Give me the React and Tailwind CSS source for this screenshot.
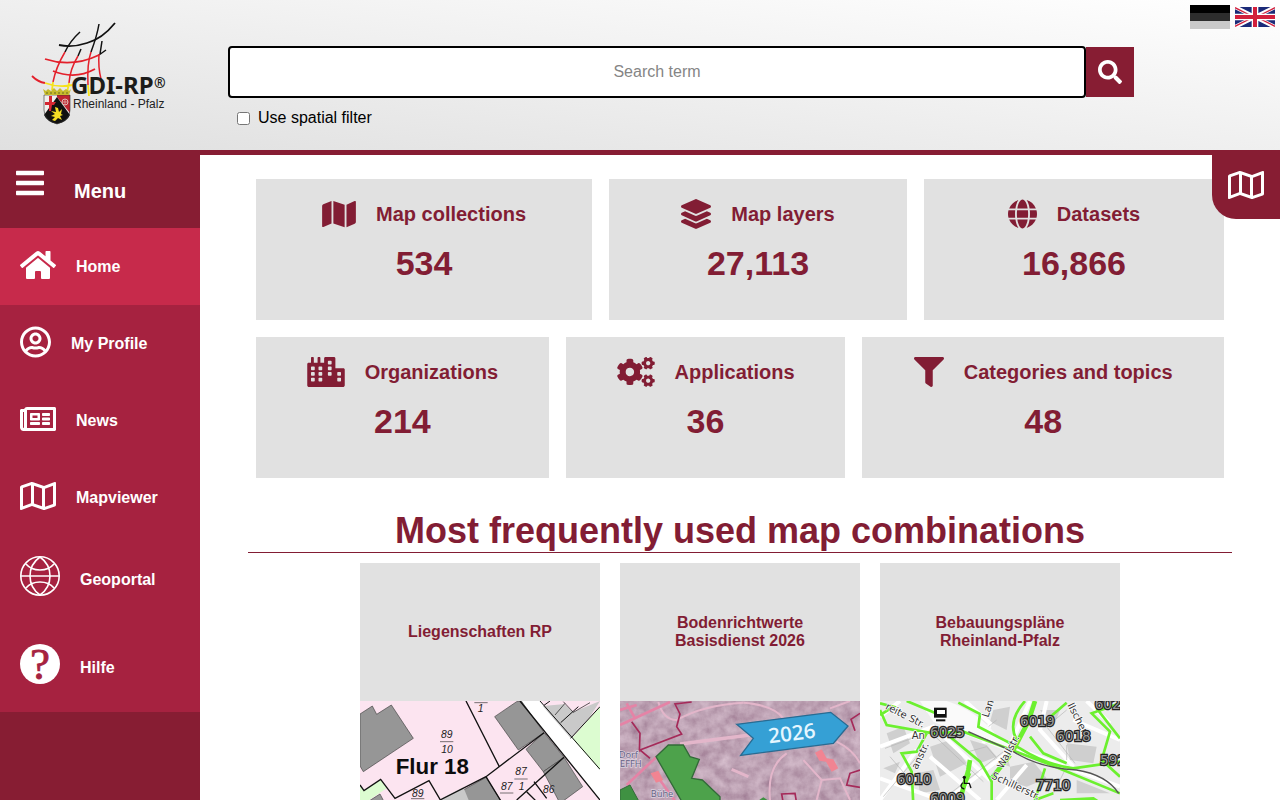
import {
  FaBars,
  FaCity,
  FaCogs,
  FaFilter,
  FaGlobe,
  FaHome,
  FaLayerGroup,
  FaMap,
  FaRegMap,
  FaRegNewspaper,
  FaRegUserCircle,
  FaSearch,
} from 'react-icons/fa';

const Logo = () => (
  <svg viewBox="0 0 140 104" className="w-[140px] h-[104px]" role="img" aria-label="GDI-RP Rheinland - Pfalz">
    <g fill="none" strokeWidth="1.5">
      <path d="M29 24 Q42 27 57 22 Q72 18 85 2" stroke="#111" strokeWidth="1.8" />
      <path d="M50 11 Q40 20 35 31" stroke="#111" />
      <path d="M69 3 Q67 15 61 31" stroke="#111" />
      <path d="M51 28 L48 35 M72 20 L70 33 M76 29 L69 34" stroke="#111" />
      <path d="M35 31 Q26 46 23 61" stroke="#e3202b" />
      <path d="M48 35 Q40 48 39 62" stroke="#e3202b" />
      <path d="M61 31 Q57 42 58 64" stroke="#e3202b" />
      <path d="M69 33 Q68 46 71 58" stroke="#e3202b" />
      <path d="M15 38 Q42 47 69 34" stroke="#e3202b" strokeWidth="1.8" />
      <path d="M23 50 Q45 59 65 48" stroke="#e3202b" strokeWidth="1.8" />
      <path d="M2 55 Q8 61 15 62" stroke="#e3202b" strokeWidth="1.8" />
      <path d="M15 62 Q28 67 43 64 M23 61 L22 69 M39 62 L37 72 M58 64 L59 75" stroke="#f6e21a" strokeWidth="1.8" />
    </g>
    <path d="M14 74 H40 V89 Q40 99 27 103 Q14 99 14 89 Z" fill="#f1efed" />
    <path d="M27 74 H40 V92 L27 76 Z" fill="#bf2530" />
    <path d="M27 76 L40 94 Q37 101 27 103 Q17 101 14 94 Z" fill="#111" />
    <path d="M19 75 h3 v6 h4 l-2 3 h-2 l-1 6 h-2 v-6 h-4 v-3 h4 Z" fill="#d42631" />
    <circle cx="35" cy="81" r="3" fill="none" stroke="#dfb9b4" />
    <path d="M32 81 h6 M35 78 v6" stroke="#dfb9b4" strokeWidth="0.7" />
    <path
      d="M25 86 l3 1 l1 4 l3 -3 l-1 5 l2 1 l-3 1 l2 4 l-4 -2 l-3 3 l-3 -1 l3 -3 l-4 -1 l4 -2 l-4 -3 l5 1 Z"
      fill="#f3dd24"
    />
    <path d="M14 74 H40 V89 Q40 99 27 103 Q14 99 14 89 Z" fill="none" stroke="#333" strokeWidth="0.6" />
    <path d="M13 68 l3 2 l2 -2 l3 2 l3 -3 l3 3 l3 -3 l3 3 l3 -2 l3 2 l2 -2 l-2 6 H15 Z" fill="#c6bb2d" />
    <path d="M16 72 h23" stroke="#686a20" strokeDasharray="2 2" />
    <text x="41" y="73" fontSize="24" fontWeight="700" fill="#1c1c1a" fontFamily='"Noto Sans", sans-serif'>
      GDI-RP
    </text>
    <text x="124" y="67" fontSize="14" fontWeight="700" fill="#1c1c1a" fontFamily='"Noto Sans", sans-serif'>
      ®
    </text>
    <text x="43" y="87" fontSize="12" fill="#222" fontFamily='"Liberation Sans", sans-serif'>
      Rheinland - Pfalz
    </text>
  </svg>
);

const GermanFlag = () => (
  <svg viewBox="0 0 40 24" className="w-10 h-6">
    <rect width="40" height="8" fill="#000" />
    <rect y="8" width="40" height="8" fill="#2d2d2d" />
    <rect y="16" width="40" height="8" fill="#c9c9c9" />
  </svg>
);

const BritishFlag = () => (
  <svg viewBox="0 0 60 30" className="w-10 h-5">
    <rect width="60" height="30" fill="#1b2a78" />
    <path d="M0 0 L60 30 M60 0 L0 30" stroke="#fff" strokeWidth="6" />
    <path d="M0 1 L28 15 M60 1 L32 15 M0 29 L28 15 M60 29 L32 15" stroke="#d21f3c" strokeWidth="2" />
    <path d="M30 0 V30 M0 15 H60" stroke="#fff" strokeWidth="10" />
    <path d="M30 0 V30 M0 15 H60" stroke="#d21f3c" strokeWidth="6" />
  </svg>
);

const GeoportalIcon = () => (
  <svg viewBox="0 0 40 40" className="w-10 h-10" fill="none" stroke="currentColor" strokeWidth="1.6">
    <circle cx="20" cy="20" r="19.2" />
    <path d="M1 20 H39" />
    <path d="M20 1 Q10 8 10 20 Q10 32 20 39 Q30 32 30 20 Q30 8 20 1 Z" />
    <path d="M6 8 Q11 14 20 14 Q29 14 34 8" />
    <path d="M6 32 Q11 26 20 26 Q29 26 34 32" />
  </svg>
);

const HelpIcon = () => (
  <svg viewBox="0 0 40 40" className="w-10 h-10 overflow-visible">
    <circle cx="20" cy="20" r="20" fill="#fff" />
    <text
      x="20"
      y="35"
      textAnchor="middle"
      fontSize="45"
      fontWeight="400"
      fill="#a62240"
      stroke="#a62240"
      strokeWidth="0.8"
      fontFamily='"Liberation Serif", serif'
    >
      ?
    </text>
  </svg>
);

const ParcelMap = () => (
  <svg viewBox="0 33 720 414" className="block w-full" fontFamily='"Liberation Sans", sans-serif'>
    <rect y="33" width="720" height="414" fill="#fce4f0" />
    <path d="M480 33 H540 L720 238 V330 Z" fill="#fff" />
    <path d="M636 145 L720 50 V240 Z" fill="#dcfcd0" />
    <path d="M548 48 L720 33 L690 80 L632 145 Z" fill="#c9c9c9" />
    <path d="M575 33 H720 L640 66 L610 40 Z" fill="#fce4f0" />
    <g fill="#969696" stroke="#444" strokeWidth="2">
      <path d="M0 72 L37 48 L50 73 L94 45 L160 145 L10 245 L0 228 Z" />
      <path d="M404 80 L470 35 L484 33 L552 128 L475 180 Z" />
      <path d="M498 178 L552 128 L612 202 L550 245 Z" />
      <path d="M550 245 L612 202 L668 290 L600 340 Z" />
      <path d="M310 300 L378 262 L440 360 H330 Z" />
      <path d="M0 350 L60 312 L80 350 Z" />
    </g>
    <path d="M0 285 L12 302 L62 268 L80 295 L20 335 L0 330 Z" fill="#dcfcd0" />
    <path d="M245 325 L310 292 L330 340 H250 Z" fill="#c9c9c9" />
    <g fill="none" stroke="#111" strokeWidth="4">
      <path d="M318 33 L418 230 M480 33 L720 330" />
      <path d="M240 330 L378 260 L552 128 M612 202 L470 330" />
      <path d="M540 33 L720 238 M552 46 L570 33 M602 98 L655 50 M632 145 L720 50" strokeWidth="3" />
      <path d="M0 285 L12 302 L62 268 L105 325 L207 272 L250 345" />
      <path d="M378 260 L430 345 M522 275 L560 325 M500 305 L540 345" />
      <path d="M610 35 L640 67 L690 38 M585 75 L615 40" strokeWidth="2" />
    </g>
    <g stroke="#333" strokeWidth="2">
      <path d="M240 155 H280 M343 38 H383 M463 267 H503 M420 309 H460 M153 326 H193" />
    </g>
    <g fontSize="31" fontStyle="italic" fill="#222" textAnchor="middle">
      <text x="260" y="144">89</text>
      <text x="261" y="190">10</text>
      <text x="362" y="67">1</text>
      <text x="483" y="256">87</text>
      <text x="485" y="300">1</text>
      <text x="440" y="300">87</text>
      <text x="173" y="320">89</text>
      <text x="566" y="308">86</text>
    </g>
    <text x="107" y="251" fontSize="67" fontWeight="700" fill="#0c0c0c">Flur 18</text>
  </svg>
);

const AerialMap = () => (
  <svg viewBox="0 33 720 414" className="block w-full" fontFamily='"Open Sans", sans-serif'>
    <filter id="grain" x="0" y="0" width="100%" height="100%">
      <feTurbulence type="fractalNoise" baseFrequency="0.03" numOctaves="4" seed="8" />
      <feColorMatrix
        values="0.7 0 0 0 0.3
                0.7 0 0 0 0.14
                0.7 0 0 0 0.25
                0 0 0 0 1"
      />
    </filter>
    <rect y="33" width="720" height="414" fill="#a18294" />
    <rect y="33" width="720" height="414" filter="url(#grain)" opacity="0.6" />
    <g fill="none" stroke="#e3b6ca" strokeWidth="6">
      <path d="M115 36 Q130 90 170 90 Q250 45 370 38" />
      <path d="M180 162 L390 135" strokeWidth="10" />
      <path d="M370 38 Q460 45 490 85 M630 55 L690 33" />
      <path d="M650 155 Q700 180 720 220 M450 330 Q440 230 500 190 M550 210 L605 270 L590 330 M605 270 L660 265 L690 330" />
      <path d="M335 238 L385 260" strokeWidth="9" />
    </g>
    <g fill="none" stroke="#e583a6" strokeWidth="8">
      <path d="M0 105 L150 36 M20 40 L45 85 M0 60 L50 45 M110 200 L20 285 M120 270 L170 340" />
    </g>
    <g fill="none" stroke="#a52a59" strokeWidth="5">
      <path d="M215 36 L165 42 L180 72 L170 110 L185 132 L60 180 L90 205 M35 95 L60 130 L58 185" />
      <path d="M720 70 L693 88 L705 122 M720 240 L690 250 L680 285 L720 292 M490 340 L485 312 L525 310 L530 340" />
    </g>
    <path
      d="M585 188 L605 178 L620 205 L640 208 L655 235 L635 245 L618 215 L598 212 Z M92 250 L115 242 L130 270 L108 278 Z"
      fill="#f18492"
    />
    <path
      d="M108 200 L145 165 L190 165 L210 200 L238 208 L215 265 L247 270 L300 320 V447 H250 Z"
      fill="#4da24b"
      stroke="#326b38"
      strokeWidth="4"
    />
    <path d="M0 300 L30 285 L60 340 H0 Z" fill="#3f9142" stroke="#326b38" strokeWidth="3" />
    <path d="M410 335 L430 322 L450 335 Z" fill="#3f9142" />
    <g fontSize="28" fill="#635e80" stroke="#dcd2e0" strokeWidth="4" paintOrder="stroke">
      <text x="-4" y="205">Dorf</text>
      <text x="0" y="232">EFFH</text>
      <text x="92" y="320">Bühe</text>
    </g>
    <path
      d="M350 103 L632 67 L684 108 L640 160 L362 196 L400 145 Z"
      fill="#35a0d5"
      stroke="#286b92"
      strokeWidth="4"
    />
    <text x="448" y="160" fontSize="62" fontWeight="600" fill="#e5f6ff" transform="rotate(-7 448 160)">
      2026
    </text>
  </svg>
);

const planNumbers = [
  ['6025', 150, 140],
  ['6019', 420, 108],
  ['6018', 528, 153],
  ['602', 644, 56],
  ['592', 660, 226],
  ['6010', 50, 283],
  ['7710', 467, 299],
  ['6009', 150, 340],
];

const PlanMap = () => (
  <svg viewBox="0 33 720 414" className="block w-full" fontFamily='"DejaVu Sans", sans-serif'>
    <rect y="33" width="720" height="414" fill="#ececec" />
    <g fill="#cfcfcf">
      <path d="M20 130 L70 110 L90 160 L40 190 Z M150 170 L210 150 L260 220 L180 260 Z" />
      <path d="M390 230 L460 215 L500 265 L440 290 L390 275 Z M340 210 L380 190 L390 230 Z" />
      <path d="M480 60 L540 60 L520 110 Z M560 160 L650 170 L640 220 L570 210 Z M10 235 L60 215 L45 250 Z" />
      <path d="M210 55 L250 80 L240 105 L200 85 Z M340 60 L390 50 L380 120 L330 95 Z M590 270 L690 310 H590 Z" />
      <path d="M270 150 L320 165 L350 200 L300 220 Z M110 250 L160 240 L180 300 L120 310 Z" />
    </g>
    <g fill="none" stroke="#fff" strokeWidth="12">
      <path d="M0 170 L160 110 L330 270 M60 33 L0 80 M0 330 L110 180 M200 330 L380 190 L450 33" />
      <path d="M140 60 L420 180 L720 290 M500 33 L480 120 L580 230 M720 150 L580 90 M350 330 L440 225" />
      <path d="M255 33 L330 100 L310 160 M620 33 L690 100 M0 265 L180 330 M150 200 L300 330" />
    </g>
    <g fill="none" stroke="#b5b5b5" strokeWidth="2">
      <path d="M15 175 L150 125 L310 275 M10 320 L115 195 M205 315 L370 185 M560 60 L500 110 L585 220" />
      <path d="M265 185 L320 170 L350 205 M350 90 L300 130 M30 200 L90 270 M520 310 L560 230 M560 165 V210" />
    </g>
    <path d="M200 33 Q300 65 360 150 L430 185 L410 195 L160 95 L120 33 Z" fill="#fafafa" />
    <g fill="none" stroke="#6cf02f" strokeWidth="8">
      <path d="M80 33 L180 75 M0 60 L20 105 L160 130 L250 125 L500 220 L720 310" />
      <path d="M210 140 L300 215 L335 275 V345 M235 38 L300 72 L295 110 L420 175 Q500 225 580 235 L720 215" />
      <path d="M0 40 L40 50 L0 75 M140 130 L110 185 L65 190 L95 245 L100 345" />
      <path d="M270 210 L265 240 L240 330 M390 195 L335 265 M465 33 L445 95 L400 180" strokeWidth="14" />
      <path d="M435 33 Q380 95 410 150 M560 38 L500 90 M450 140 L490 190 L560 220" />
      <path d="M720 40 L635 70 L690 125 L665 210 L720 260 M650 55 L720 145" />
      <path d="M495 235 L465 330 L520 310 M540 330 L640 325 L670 345 M230 345 L270 250" />
    </g>
    <path d="M265 125 L400 185 Q480 235 590 240 Q680 255 716 310" fill="none" stroke="#555" strokeWidth="4" />
    <path d="M162 53 h38 v30 h-38 Z" fill="#111" />
    <path d="M171 60 h24 v12 h-24 Z" fill="#fff" />
    <path d="M168 91 h28" stroke="#111" strokeWidth="6" />
    <circle cx="253" cy="262" r="5" fill="#111" />
    <path d="M253 265 v15 h15 l5 14 M248 278 q-12 14 5 19" fill="none" stroke="#111" strokeWidth="4" />
    <g fontSize="30" fill="#333" stroke="#fff" strokeWidth="4" paintOrder="stroke">
      <text x="14" y="56" transform="rotate(27 14 56)">reite Str.</text>
      <text x="95" y="146">An</text>
      <text x="325" y="84" transform="rotate(-72 325 84)">Lan</text>
      <text x="112" y="240" transform="rotate(-65 112 240)">anstr.</text>
      <text x="368" y="238" transform="rotate(-62 368 238)">Wallstr.</text>
      <text x="332" y="264" transform="rotate(25 332 264)">Schillerstr.</text>
      <text x="562" y="45" transform="rotate(63 562 45)">llscherw</text>
    </g>
    <g fontSize="41" fill="#999" stroke="#222" strokeWidth="7" paintOrder="stroke">
      {planNumbers.map(([label, x, y]) => (
        <text key={label} x={x} y={y}>
          {label}
        </text>
      ))}
    </g>
  </svg>
);

const menuItems = [
  { label: 'Home', icon: <FaHome className="w-9 h-8" />, active: true },
  { label: 'My Profile', icon: <FaRegUserCircle className="w-[31px] h-8" /> },
  { label: 'News', icon: <FaRegNewspaper className="w-9 h-8" /> },
  { label: 'Mapviewer', icon: <FaRegMap className="w-9 h-8" /> },
  { label: 'Geoportal', icon: <GeoportalIcon />, tall: true },
  { label: 'Hilfe', icon: <HelpIcon />, tall: true },
];

const firstRow = [
  { label: 'Map collections', count: '534', icon: <FaMap className="w-[34px] h-[30px]" /> },
  { label: 'Map layers', count: '27,113', icon: <FaLayerGroup className="w-[30px] h-[30px]" /> },
  { label: 'Datasets', count: '16,866', icon: <FaGlobe className="w-[29px] h-[30px]" /> },
];

const secondRow = [
  { label: 'Organizations', count: '214', icon: <FaCity className="w-[38px] h-[30px]" /> },
  { label: 'Applications', count: '36', icon: <FaCogs className="w-[38px] h-[30px]" /> },
  { label: 'Categories and topics', count: '48', icon: <FaFilter className="w-[30px] h-[30px]" /> },
];

const combinations = [
  { title: 'Liegenschaften RP', Picture: ParcelMap },
  { title: 'Bodenrichtwerte Basisdienst 2026', Picture: AerialMap },
  { title: 'Bebauungspläne Rheinland-Pfalz', Picture: PlanMap },
];

const Header = () => (
  <header className="relative flex shrink-0 h-[155px] border-b-[5px] border-[#871d33] bg-linear-to-tr from-[#e0e0e0] to-white">
    <a href="#home" className="w-[228px] shrink-0 pl-[30px] pt-[21px]">
      <Logo />
    </a>
    <form className="flex-1 mr-[146px] pt-[46px]" onSubmit={(e) => e.preventDefault()}>
      <div className="flex items-center">
        <input
          type="text"
          aria-label="Search term"
          placeholder="Search term"
          className="flex-1 min-w-0 h-[52px] rounded-sm border-2 border-black bg-white text-center text-base placeholder:text-[#858585] outline-none"
        />
        <button
          type="submit"
          aria-label="Search"
          className="flex items-center justify-center w-12 h-[50px] bg-[#871d33] text-white"
        >
          <FaSearch className="size-6" />
        </button>
      </div>
      <label className="flex items-center gap-2 mt-2 pl-[9px] text-base text-black">
        <input type="checkbox" className="size-[13px]" />
        Use spatial filter
      </label>
    </form>
    <div className="absolute top-[5px] right-[5px] flex items-center gap-[5px]">
      <button type="button" aria-label="Deutsch">
        <GermanFlag />
      </button>
      <button type="button" aria-label="English">
        <BritishFlag />
      </button>
    </div>
  </header>
);

const Sidebar = () => (
  <nav className="w-[200px] shrink-0 bg-[#871d33] text-white">
    <button type="button" className="flex w-full h-[73px] pl-4 pt-3 items-start gap-[30px]">
      <FaBars className="w-7 h-8" />
      <span className="pt-2.5 text-xl leading-7 font-bold">Menu</span>
    </button>
    <ul className="bg-[#a62240]">
      {menuItems.map(({ label, icon, active, tall }) => (
        <li key={label}>
          <a
            href="#menu"
            className={`flex items-center gap-5 pl-5 font-bold ${tall ? 'h-[88px] pb-2' : 'h-[77px] pb-1'} ${
              active ? 'bg-[#c72a4b]' : ''
            }`}
          >
            {icon}
            <span className={tall ? 'pt-2' : 'pt-1'}>{label}</span>
          </a>
        </li>
      ))}
    </ul>
  </nav>
);

const StatCard = ({ label, count, icon }) => (
  <a href="#search" className="flex flex-col items-center h-[141px] pt-5 bg-[#e1e1e1]">
    <div className="flex items-center gap-5">
      {icon}
      <span className="text-xl font-bold">{label}</span>
    </div>
    <span className="mt-3.5 text-[34px] leading-10 font-bold">{count}</span>
  </a>
);

const App = () => {
  return (
    <div className="relative flex flex-col h-screen overflow-hidden bg-white font-['Liberation_Sans',Arial,sans-serif]">
      <Header />
      <div className="flex flex-1 min-h-0">
        <Sidebar />
        <main className="flex-1 min-w-0 px-12 pt-6 text-[#821d34]">
          <div className="flex flex-col gap-[17px] px-2">
            <div className="grid grid-cols-[336fr_298fr_300fr] gap-[17px]">
              {firstRow.map((card) => (
                <StatCard key={card.label} {...card} />
              ))}
            </div>
            <div className="grid grid-cols-[293fr_280fr_362fr] gap-[17px]">
              {secondRow.map((card) => (
                <StatCard key={card.label} {...card} />
              ))}
            </div>
          </div>
          <h1 className="mt-8 border-b border-[#821d34] text-center text-4xl leading-[42px] font-bold">
            Most frequently used map combinations
          </h1>
          <div className="flex justify-center gap-5 mt-2.5">
            {combinations.map(({ title, Picture }) => (
              <a key={title} href="#map" className="w-60 bg-[#e1e1e1]">
                <div className="flex items-center justify-center h-[138px] px-10 text-center text-base leading-[18px] font-bold">
                  {title}
                </div>
                <Picture />
              </a>
            ))}
          </div>
        </main>
      </div>
      <button
        type="button"
        aria-label="Open map viewer"
        className="absolute top-[150px] right-0 flex items-center justify-center w-[68px] h-[69px] rounded-bl-3xl bg-[#871d33] text-white"
      >
        <FaRegMap className="w-9 h-8" />
      </button>
    </div>
  );
};

export default App;
